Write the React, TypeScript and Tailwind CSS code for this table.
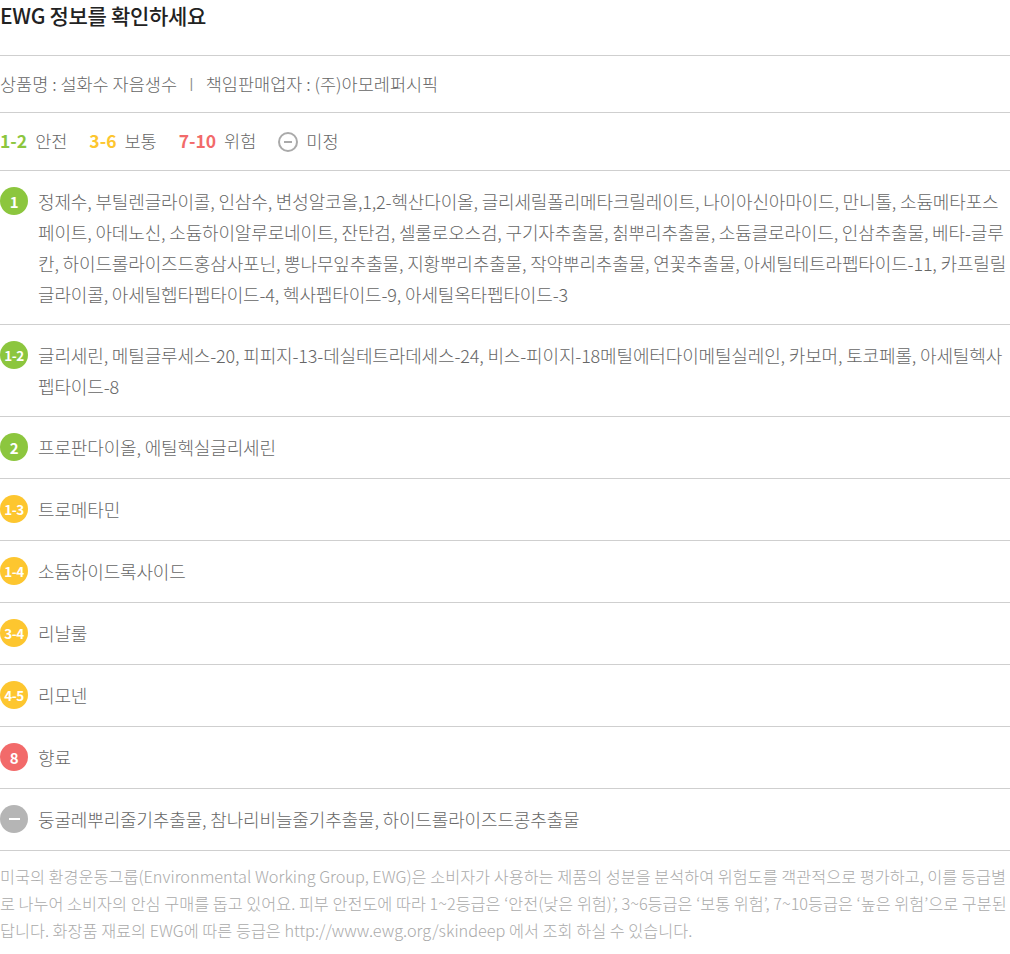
const ingredients = [
	{
		grade: "1",
		tone: "green",
		text: "정제수, 부틸렌글라이콜, 인삼수, 변성알코올,1,2-헥산다이올, 글리세릴폴리메타크릴레이트, 나이아신아마이드, 만니톨, 소듐메타포스페이트, 아데노신, 소듐하이알루로네이트, 잔탄검, 셀룰로오스검, 구기자추출물, 칡뿌리추출물, 소듐클로라이드, 인삼추출물, 베타-글루칸, 하이드롤라이즈드홍삼사포닌, 뽕나무잎추출물, 지황뿌리추출물, 작약뿌리추출물, 연꽃추출물, 아세틸테트라펩타이드-11, 카프릴릴글라이콜, 아세틸헵타펩타이드-4, 헥사펩타이드-9, 아세틸옥타펩타이드-3",
	},
	{
		grade: "1-2",
		tone: "green",
		text: "글리세린, 메틸글루세스-20, 피피지-13-데실테트라데세스-24, 비스-피이지-18메틸에터다이메틸실레인, 카보머, 토코페롤, 아세틸헥사펩타이드-8",
	},
	{ grade: "2", tone: "green", text: "프로판다이올, 에틸헥실글리세린" },
	{ grade: "1-3", tone: "yellow", text: "트로메타민" },
	{ grade: "1-4", tone: "yellow", text: "소듐하이드록사이드" },
	{ grade: "3-4", tone: "yellow", text: "리날룰" },
	{ grade: "4-5", tone: "yellow", text: "리모넨" },
	{ grade: "8", tone: "red", text: "향료" },
	{ grade: "-", tone: "gray", text: "둥굴레뿌리줄기추출물, 참나리비늘줄기추출물, 하이드롤라이즈드콩추출물" },
];

const toneClass: Record<string, string> = {
	green: "bg-[#8cc63e]",
	yellow: "bg-[#fdc62f]",
	red: "bg-[#f26a6a]",
	gray: "bg-[#b5b5b5]",
};

const Badge = ({ grade, tone }: { grade: string; tone: string }) => (
	<span
		className={`${toneClass[tone]} shrink-0 w-[28px] h-[28px] mt-[1px] rounded-full flex items-center justify-center text-white font-semibold tracking-[-0.5px]`}
		style={{ fontSize: grade.length > 1 ? 13.5 : 15 }}
	>
		{grade === "-" ? <span className="block w-[11px] h-[2px] bg-white" /> : grade}
	</span>
);

export default function App() {
	return (
		<div className="w-[1010px] bg-white font-['Noto_Sans_CJK_KR','Noto_Sans',sans-serif] text-[#777]">
			<div className="h-[55px]">
				<h1 className="text-[21px] leading-[30px] font-medium text-[#222] tracking-[-0.3px]">
					EWG 정보를 확인하세요
				</h1>
			</div>
			<div className="border-t border-[#cfcfcf] h-[57px] flex items-center text-[17.5px] font-light text-[#666]">
				<span>상품명 : 설화수 자음생수</span>
				<span className="mx-[12px] text-[#888]">I</span>
				<span>책임판매업자 : (주)아모레퍼시픽</span>
			</div>
			<div className="border-t border-[#cfcfcf] h-[58px] flex items-center text-[17.5px] font-light text-[#666] gap-[22px]">
				<span className="flex items-center gap-[8px]">
					<b className="text-[#8cc63e] font-semibold">1-2</b>안전
				</span>
				<span className="flex items-center gap-[8px]">
					<b className="text-[#fdc62f] font-semibold">3-6</b>보통
				</span>
				<span className="flex items-center gap-[8px]">
					<b className="text-[#f26a6a] font-semibold">7-10</b>위험
				</span>
				<span className="flex items-center gap-[8px]">
					<span className="w-[20px] h-[20px] rounded-full border-2 border-[#aaa] flex items-center justify-center">
						<span className="block w-[8px] h-[2px] bg-[#aaa]" />
					</span>
					미정
				</span>
			</div>
			{ingredients.map((item) => (
				<div
					key={item.grade + item.text}
					className="border-t border-[#cfcfcf] pt-[15px] pb-[14px] min-h-[62px] flex gap-[10px] text-[18px] leading-[31px] tracking-[-0.15px] font-light text-[#666]"
				>
					<Badge grade={item.grade} tone={item.tone} />
					<p>{item.text}</p>
				</div>
			))}
			<p className="border-t border-[#cfcfcf] pt-[12px] text-[16.3px] leading-[27px] font-light text-[#aaa]">
				미국의 환경운동그룹(Environmental Working Group, EWG)은 소비자가 사용하는 제품의 성분을 분석하여 위험도를 객관적으로 평가하고, 이를 등급별로 나누어 소비자의 안심 구매를 돕고 있어요. 피부 안전도에 따라 1~2등급은 ‘안전(낮은 위험)’, 3~6등급은 ‘보통 위험’, 7~10등급은 ‘높은 위험’으로 구분된답니다. 화장품 재료의 EWG에 따른 등급은 http://www.ewg.org/skindeep 에서 조회 하실 수 있습니다.
			</p>
		</div>
	);
}
